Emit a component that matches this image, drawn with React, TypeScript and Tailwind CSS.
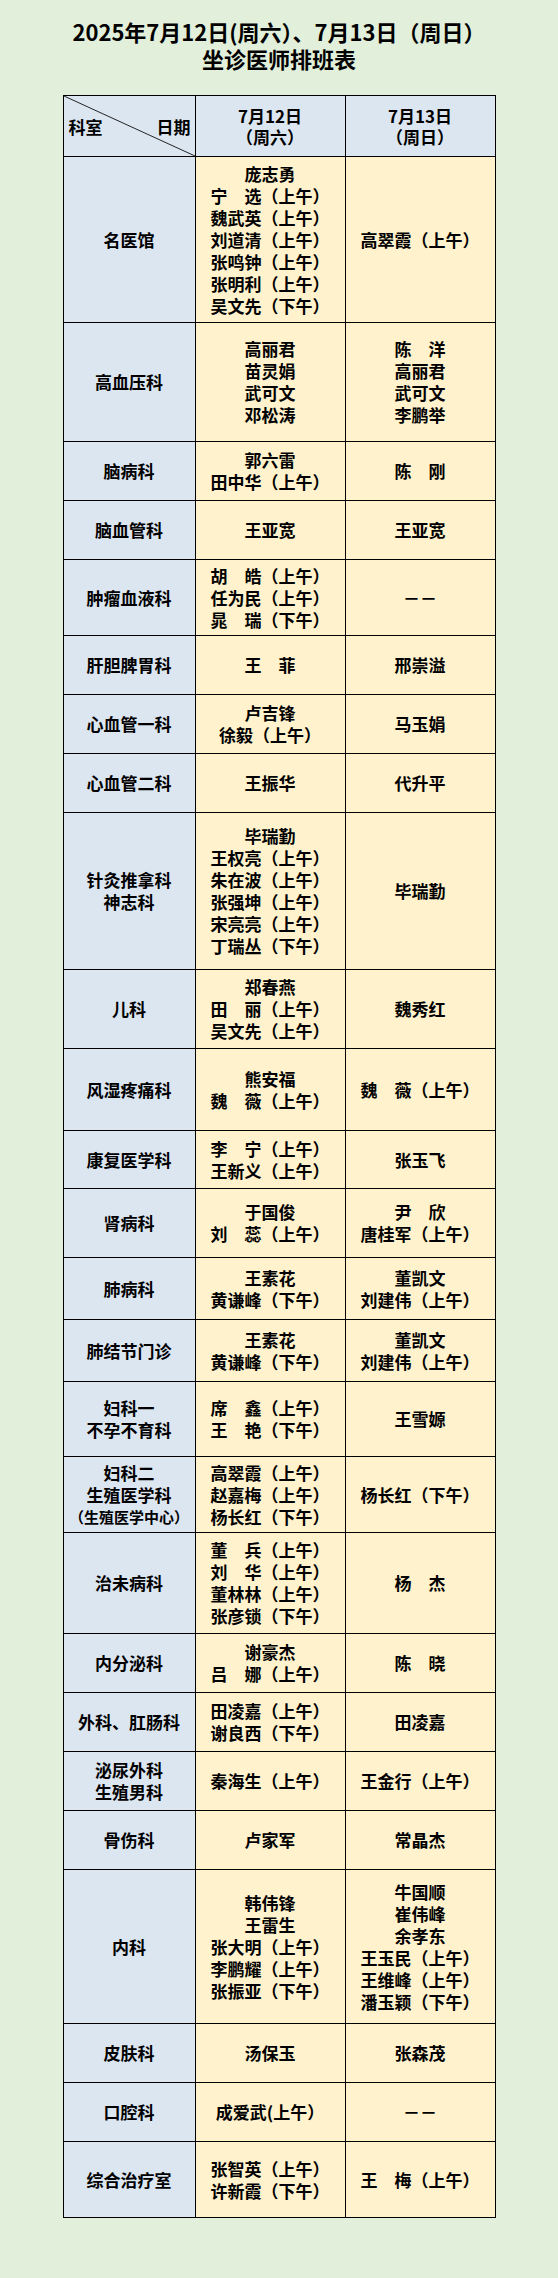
import React from 'react';

type Row = { h: string; dept: string[]; d1: string[]; d2: string[] };

const rows: Row[] = [
  { h: 'h-[166px]', dept: ['名医馆'], d1: ['庞志勇', '宁　选（上午）', '魏武英（上午）', '刘道清（上午）', '张鸣钟（上午）', '张明利（上午）', '吴文先（下午）'], d2: ['高翠霞（上午）'] },
  { h: 'h-[119px]', dept: ['高血压科'], d1: ['高丽君', '苗灵娟', '武可文', '邓松涛'], d2: ['陈　洋', '高丽君', '武可文', '李鹏举'] },
  { h: 'h-[59px]', dept: ['脑病科'], d1: ['郭六雷', '田中华（上午）'], d2: ['陈　刚'] },
  { h: 'h-[59px]', dept: ['脑血管科'], d1: ['王亚宽'], d2: ['王亚宽'] },
  { h: 'h-[76px]', dept: ['肿瘤血液科'], d1: ['胡　皓（上午）', '任为民（上午）', '晁　瑞（下午）'], d2: ['－－'] },
  { h: 'h-[59px]', dept: ['肝胆脾胃科'], d1: ['王　菲'], d2: ['邢崇溢'] },
  { h: 'h-[59px]', dept: ['心血管一科'], d1: ['卢吉锋', '徐毅（上午）'], d2: ['马玉娟'] },
  { h: 'h-[59px]', dept: ['心血管二科'], d1: ['王振华'], d2: ['代升平'] },
  { h: 'h-[157px]', dept: ['针灸推拿科', '神志科'], d1: ['毕瑞勤', '王权亮（上午）', '朱在波（上午）', '张强坤（上午）', '宋亮亮（上午）', '丁瑞丛（下午）'], d2: ['毕瑞勤'] },
  { h: 'h-[79px]', dept: ['儿科'], d1: ['郑春燕', '田　丽（上午）', '吴文先（上午）'], d2: ['魏秀红'] },
  { h: 'h-[82px]', dept: ['风湿疼痛科'], d1: ['熊安福', '魏　薇（上午）'], d2: ['魏　薇（上午）'] },
  { h: 'h-[58px]', dept: ['康复医学科'], d1: ['李　宁（上午）', '王新义（上午）'], d2: ['张玉飞'] },
  { h: 'h-[69px]', dept: ['肾病科'], d1: ['于国俊', '刘　蕊（上午）'], d2: ['尹　欣', '唐桂军（上午）'] },
  { h: 'h-[62px]', dept: ['肺病科'], d1: ['王素花', '黄谦峰（下午）'], d2: ['董凯文', '刘建伟（上午）'] },
  { h: 'h-[62px]', dept: ['肺结节门诊'], d1: ['王素花', '黄谦峰（下午）'], d2: ['董凯文', '刘建伟（上午）'] },
  { h: 'h-[75px]', dept: ['妇科一', '不孕不育科'], d1: ['席　鑫（上午）', '王　艳（下午）'], d2: ['王雪嫄'] },
  { h: 'h-[76px]', dept: ['妇科二', '生殖医学科', '（生殖医学中心）'], d1: ['高翠霞（上午）', '赵嘉梅（上午）', '杨长红（下午）'], d2: ['杨长红（下午）'] },
  { h: 'h-[101px]', dept: ['治未病科'], d1: ['董　兵（上午）', '刘　华（上午）', '董林林（上午）', '张彦锁（下午）'], d2: ['杨　杰'] },
  { h: 'h-[59px]', dept: ['内分泌科'], d1: ['谢豪杰', '吕　娜（上午）'], d2: ['陈　晓'] },
  { h: 'h-[59px]', dept: ['外科、肛肠科'], d1: ['田凌嘉（上午）', '谢良西（下午）'], d2: ['田凌嘉'] },
  { h: 'h-[59px]', dept: ['泌尿外科', '生殖男科'], d1: ['秦海生（上午）'], d2: ['王金行（上午）'] },
  { h: 'h-[59px]', dept: ['骨伤科'], d1: ['卢家军'], d2: ['常晶杰'] },
  { h: 'h-[154px]', dept: ['内科'], d1: ['韩伟锋', '王雷生', '张大明（上午）', '李鹏耀（上午）', '张振亚（下午）'], d2: ['牛国顺', '崔伟峰', '余孝东', '王玉民（上午）', '王维峰（上午）', '潘玉颖（下午）'] },
  { h: 'h-[59px]', dept: ['皮肤科'], d1: ['汤保玉'], d2: ['张森茂'] },
  { h: 'h-[59px]', dept: ['口腔科'], d1: ['成爱武(上午）'], d2: ['－－'] },
  { h: 'h-[76px]', dept: ['综合治疗室'], d1: ['张智英（上午）', '许新霞（下午）'], d2: ['王　梅（上午）'] },
];

function Lines({ items }: { items: string[] }) {
  return (
    <div className="flex flex-col items-center">
      {items.map((t, i) => (
        <div
          key={i}
          className={t.startsWith('（生殖') ? 'text-[15px] leading-[22px] whitespace-pre' : 'leading-[22px] whitespace-pre'}
        >
          {t}
        </div>
      ))}
    </div>
  );
}

export default function App() {
  return (
    <div className="min-h-[2278px] w-full bg-[#e2efda] font-['Noto_Sans_CJK_SC',sans-serif] font-bold text-black">
      <div className="pt-[18px] text-center text-[22px] leading-[27px]">
        <div>2025年7月12日(周六）、7月13日（周日）</div>
        <div>坐诊医师排班表</div>
      </div>
      <div className="mx-auto mt-[23px] w-[433px] border-l border-t border-black text-[17px]">
        <div className="grid grid-cols-[132px_150px_150px]">
          <div className="relative h-[61px] border-b border-r border-black bg-[#dce6f1]">
            <svg className="absolute inset-0 h-full w-full" viewBox="0 0 132 60" preserveAspectRatio="none">
              <line x1="0" y1="0" x2="132" y2="60" stroke="#222" strokeWidth="1" />
            </svg>
            <div className="absolute left-[5px] top-[20px] leading-[22px]">科室</div>
            <div className="absolute right-[4px] top-[20px] leading-[22px]">日期</div>
          </div>
          <div className="flex h-[61px] flex-col items-center justify-center border-b border-r border-black bg-[#dce6f1] leading-[21px]">
            <div>7月12日</div>
            <div>（周六）</div>
          </div>
          <div className="flex h-[61px] flex-col items-center justify-center border-b border-r border-black bg-[#dce6f1] leading-[21px]">
            <div>7月13日</div>
            <div>（周日）</div>
          </div>
          {rows.map((r, i) => (
            <React.Fragment key={i}>
              <div className={`${r.h} flex items-center justify-center border-b border-r border-black bg-[#dce6f1]`}>
                <Lines items={r.dept} />
              </div>
              <div className={`${r.h} flex items-center justify-center border-b border-r border-black bg-[#fff2cc]`}>
                <Lines items={r.d1} />
              </div>
              <div className={`${r.h} flex items-center justify-center border-b border-r border-black bg-[#fff2cc]`}>
                <Lines items={r.d2} />
              </div>
            </React.Fragment>
          ))}
        </div>
      </div>
    </div>
  );
}
